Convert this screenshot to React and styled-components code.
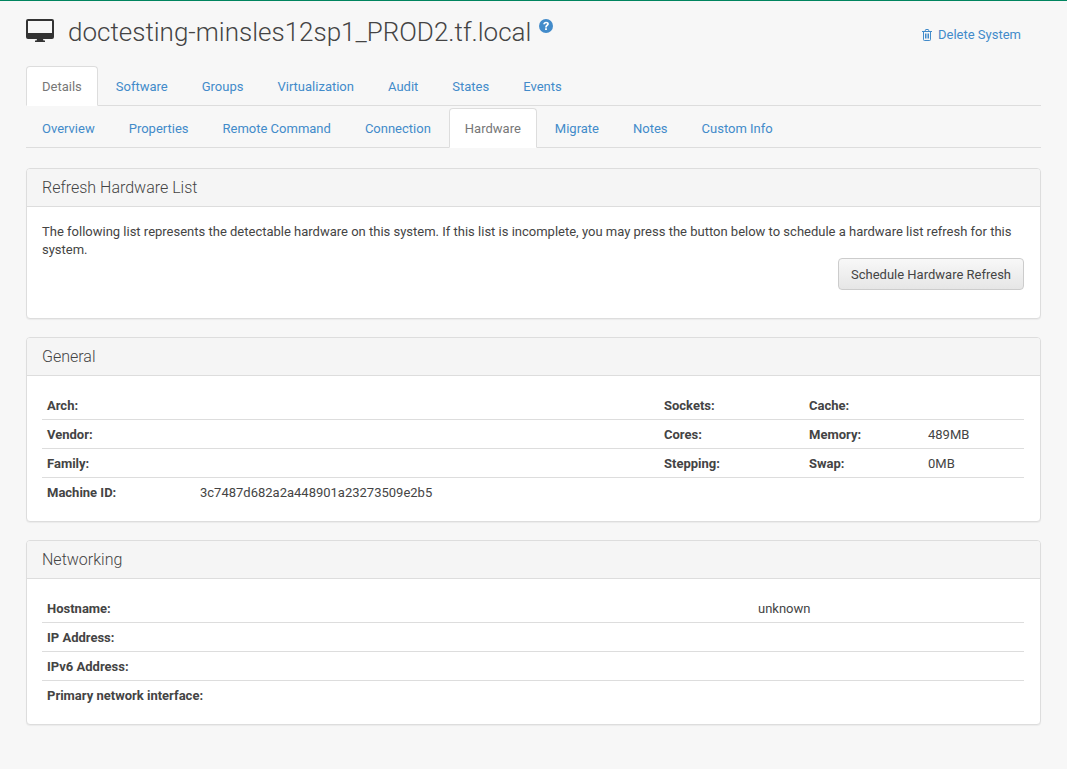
import React from "react";
import styled, { createGlobalStyle } from "styled-components";

const Global = createGlobalStyle`
  html, body { margin: 0; padding: 0; background: #f7f7f7; }
  body { font-family: Roboto, "Liberation Sans", sans-serif; font-size: 13px; line-height: 18px; color: #444; }
  * { box-sizing: border-box; }
`;
const Page = styled.div`
  border-top: 1px solid #00855f;
  padding: 0 26px;
  height: 769px;
  overflow: hidden;
`;
const Header = styled.div`
  display: flex;
  justify-content: space-between;
  align-items: flex-start;
  height: 65px;
  padding-top: 13px;
`;
const TitleWrap = styled.div`
  display: flex;
  align-items: flex-start;
`;
const Title = styled.h1`
  margin: 0 0 0 14px;
  font-weight: 300;
  font-size: 26px;
  line-height: 36px;
  color: #444;
`;
const Help = styled.svg`
  width: 14px;
  height: 14px;
  margin: 5px 0 0 8px;
`;
const Delete = styled.a`
  display: flex;
  align-items: center;
  gap: 6px;
  color: #428bca;
  margin: 12px 20px 0 0;
  font-size: 13px;
`;
const Tabs = styled.div`
  display: flex;
  border-bottom: 1px solid #ddd;
  height: ${(p) => p.$h}px;
  padding-top: ${(p) => p.$top}px;
`;
const Tab = styled.a`
  display: block;
  padding: 11px 15px 0;
  margin-right: 2px;
  color: ${(p) => (p.$active ? "#777" : "#428bca")};
  background: ${(p) => (p.$active ? "#fff" : "transparent")};
  border: 1px solid ${(p) => (p.$active ? "#ddd" : "transparent")};
  border-bottom: ${(p) => (p.$active ? "1px solid #fff" : "none")};
  border-radius: 4px 4px 0 0;
  height: calc(100% + 1px);
  white-space: nowrap;
`;
const Panels = styled.div`
  display: flex;
  flex-direction: column;
  gap: 18px;
  margin-top: 20px;
`;
const Panel = styled.section`
  background: #fff;
  border: 1px solid #ddd;
  border-radius: 4px;
  box-shadow: 0 1px 1px rgba(0, 0, 0, 0.05);
  overflow: hidden;
`;
const PanelHead = styled.h3`
  margin: 0;
  height: 38px;
  padding: 0 15px;
  background: #f5f5f5;
  border-bottom: 1px solid #ddd;
  font-size: 16px;
  font-weight: 300;
  line-height: 37px;
  color: #444;
`;
const PanelBody = styled.div`
  padding: 15px;
  display: flow-root;
`;
const Para = styled.p`
  margin: 0 0 -1px;
  padding-top: 1px;
`;
const Actions = styled.div`
  display: flex;
  justify-content: flex-end;
  margin: 0 1px 13px 0;
`;
const Button = styled.button`
  font: inherit;
  color: #444;
  height: 32px;
  padding: 2px 12px 0;
  border: 1px solid #ccc;
  border-radius: 4px;
  background: linear-gradient(to bottom, #f8f8f8, #e6e6e6);
`;
const Table = styled.table`
  width: calc(100% - 1px);
  table-layout: fixed;
  border-collapse: separate;
  border-spacing: 0;
`;
const Row = styled.tr`
  height: 29px;
  & > * { border-bottom: 1px solid #ddd; }
  &:last-child { height: 28px; }
  &:last-child > * { border-bottom: none; }
`;
const Th = styled.th`
  text-align: left;
  font-weight: 700;
  padding: 2px 5px 0;
  color: #444;
`;
const Td = styled.td`
  padding: 2px 5px 0;
`;

const main = ["Details", "Software", "Groups", "Virtualization", "Audit", "States", "Events"];
const sub = ["Overview", "Properties", "Remote Command", "Connection", "Hardware", "Migrate", "Notes", "Custom Info"];

const Monitor = () => (
  <svg width="28" height="23" viewBox="0 0 28 23" style={{ marginTop: 5 }}>
    <path fillRule="evenodd" fill="#333" d="M2 0h24a2 2 0 0 1 2 2v16a2 2 0 0 1-2 2H2a2 2 0 0 1-2-2V2a2 2 0 0 1 2-2zM2 2v12h24V2zM11 20h6l.5 1.500H19V23H9v-1.500h1.500z" />
  </svg>
);
const Trash = () => (
  <svg width="10" height="12" viewBox="0 0 10 12" fill="none" stroke="#428bca" strokeWidth="1">
    <path d="M0 2.500h10M1.500 2.500v8.200c0 .5.300.8.800.8h5.400c.5 0 .8-.3.8-.8V2.500M3.300 2.500V1.200c0-.4.300-.7.700-.7h2c.4 0 .7.300.7.700v1.300M3.500 4.500v5M5 4.500v5M6.500 4.500v5" />
  </svg>
);

export default function App() {
  return (
    <Page>
      <Global />
      <Header>
        <TitleWrap>
          <Monitor />
          <Title>doctesting-minsles12sp1_PROD2.tf.local</Title>
          <Help viewBox="0 0 14 14">
            <circle cx="7" cy="7" r="7" fill="#428bca" />
            <path d="M4.200 5.200c.1-1.600 1.300-2.500 2.900-2.500 1.600 0 2.800.9 2.800 2.300 0 1.900-2.100 1.800-2.100 3.400H6.100c0-2.400 2-2.400 2-3.300 0-.5-.4-.9-1-.9-.7 0-1.100.4-1.200 1.100z M6.100 9.300h1.800v1.800H6.100z" fill="#fff" />
          </Help>
        </TitleWrap>
        <Delete><Trash />Delete System</Delete>
      </Header>
      <Tabs $h={40} $top={0}>
        {main.map((t) => <Tab key={t} $active={t === "Details"}>{t}</Tab>)}
      </Tabs>
      <Tabs $h={42} $top={2}>
        {sub.map((t) => <Tab key={t} $active={t === "Hardware"}>{t}</Tab>)}
      </Tabs>
      <Panels>
        <Panel>
          <PanelHead>Refresh Hardware List</PanelHead>
          <PanelBody>
            <Para>The following list represents the detectable hardware on this system. If this list is incomplete, you may press the button below to schedule a hardware list refresh for this system.</Para>
            <Actions><Button>Schedule Hardware Refresh</Button></Actions>
          </PanelBody>
        </Panel>
        <Panel>
          <PanelHead>General</PanelHead>
          <PanelBody>
            <Table>
              <colgroup>
                <col style={{ width: 153 }} /><col style={{ width: 464 }} /><col style={{ width: 145 }} /><col style={{ width: 119 }} /><col />
              </colgroup>
              <tbody>
                <Row><Th>Arch:</Th><Td /><Th>Sockets:</Th><Th>Cache:</Th><Td /></Row>
                <Row><Th>Vendor:</Th><Td /><Th>Cores:</Th><Th>Memory:</Th><Td>489MB</Td></Row>
                <Row><Th>Family:</Th><Td /><Th>Stepping:</Th><Th>Swap:</Th><Td>0MB</Td></Row>
                <Row><Th>Machine ID:</Th><Td colSpan={4}>3c7487d682a2a448901a23273509e2b5</Td></Row>
              </tbody>
            </Table>
          </PanelBody>
        </Panel>
        <Panel>
          <PanelHead>Networking</PanelHead>
          <PanelBody>
            <Table>
              <colgroup><col style={{ width: 711 }} /><col /></colgroup>
              <tbody>
                <Row><Th>Hostname:</Th><Td>unknown</Td></Row>
                <Row><Th>IP Address:</Th><Td /></Row>
                <Row><Th>IPv6 Address:</Th><Td /></Row>
                <Row><Th>Primary network interface:</Th><Td /></Row>
              </tbody>
            </Table>
          </PanelBody>
        </Panel>
      </Panels>
    </Page>
  );
}
